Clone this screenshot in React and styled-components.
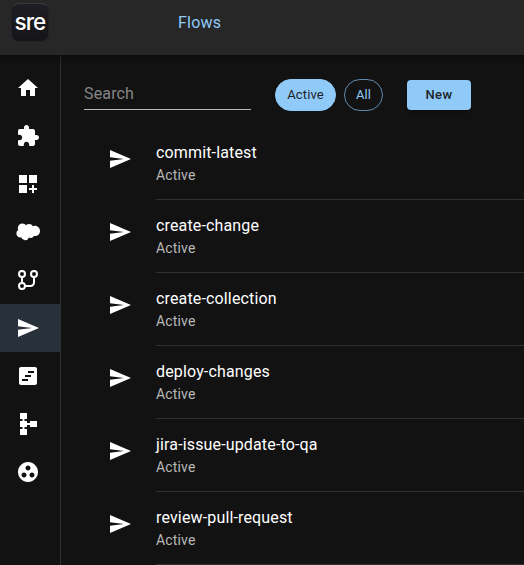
import React from "react";
import styled, { createGlobalStyle } from "styled-components";

const GlobalStyle = createGlobalStyle`
  * { box-sizing: border-box; }
  body {
    margin: 0;
    background: #121212;
    color: #fff;
    font-family: Roboto, sans-serif;
    overflow: hidden;
  }
`;

const Page = styled.div`
  display: flex;
  flex-direction: column;
  height: 565px;
  overflow: hidden;
`;

const Header = styled.header`
  display: flex;
  flex: none;
  height: 55px;
  padding-left: 11px;
  background: #272727;
  box-shadow: 0 2px 4px -1px rgba(0, 0, 0, 0.2), 0 4px 5px rgba(0, 0, 0, 0.14),
    0 1px 10px rgba(0, 0, 0, 0.12);
  z-index: 1;
`;

const Logo = styled.div`
  display: flex;
  justify-content: center;
  width: 38px;
  height: 39px;
  margin-top: 3px;
  border: 1px solid #222128;
  border-top-color: #3b3a42;
  border-radius: 8px;
  background: linear-gradient(#1e1d23, #151518);
  font: 500 22.5px/36px Inter, sans-serif;
  letter-spacing: -0.9px;
`;

const HeaderTab = styled.div`
  margin-left: 129px;
  color: #90caf9;
  font-size: 16px;
  line-height: 46px;
  letter-spacing: 0.2px;
`;

const Body = styled.div`
  display: flex;
  flex: 1;
  min-height: 0;
`;

const Sidebar = styled.nav`
  flex: none;
  width: 61px;
  padding-top: 9px;
  border-right: 1px solid #2e2e2e;
`;

const NavItem = styled.div`
  display: flex;
  align-items: center;
  height: 48px;
  padding-left: 16px;
  background: ${({ $selected }) => ($selected ? "#28303a" : "transparent")};
`;

const Icon = styled.svg`
  display: block;
  flex: none;
  width: 24px;
  height: 24px;
  fill: #fff;
`;

const Content = styled.main`
  flex: 1;
  min-width: 0;
  padding-top: 24px;
`;

const Toolbar = styled.div`
  display: flex;
  align-items: flex-start;
  height: 48px;
  padding-left: 23px;
`;

const Search = styled.input`
  width: 167px;
  height: 31px;
  padding: 0 0 2px;
  border: 0;
  border-bottom: 1px solid #b8b8b8;
  outline: none;
  background: transparent;
  color: #fff;
  font: 16px Roboto, sans-serif;
  letter-spacing: 0.15px;
  &::placeholder { color: #858585; opacity: 1; }
`;

const Chip = styled.div`
  width: ${({ $width }) => $width}px;
  height: 32px;
  margin-left: ${({ $gap }) => $gap}px;
  border: 1px solid ${({ $filled }) => ($filled ? "#90caf9" : "#6088aa")};
  border-radius: 16px;
  background: ${({ $filled }) => ($filled ? "#90caf9" : "transparent")};
  color: ${({ $filled }) => ($filled ? "#1c2429" : "#90caf9")};
  font-size: 13px;
  line-height: 30px;
  letter-spacing: 0.12px;
  text-align: center;
`;

const NewButton = styled.button`
  width: 64px;
  height: 30px;
  margin: 1px 0 0 24px;
  padding: 0;
  border: 0;
  border-radius: 4px;
  background: #90caf9;
  box-shadow: 0 2px 3px rgba(0, 0, 0, 0.3);
  color: #1c2429;
  font: 500 13px/30px Roboto, sans-serif;
  letter-spacing: 0.46px;
`;

const Row = styled.div`
  display: flex;
  padding-left: 47px;
  height: 73px;
`;

const RowIcon = styled.div`
  width: 48px;
  padding-top: 20px;
`;

const RowText = styled.div`
  flex: 1;
  padding-top: 14px;
  border-bottom: 1px solid #303030;
`;

const Title = styled.div`
  font-size: 16px;
  line-height: 24px;
  letter-spacing: 0.15px;
`;

const Status = styled.div`
  color: #b8b8b8;
  font-size: 14px;
  line-height: 20px;
  letter-spacing: 0.15px;
`;

const paths = {
  home: "M10 20v-6h4v6h5v-8h3L12 3 2 12h3v8z",
  extension:
    "M20.5 11H19V7c0-1.1-.9-2-2-2h-4V3.5C13 2.12 11.88 1 10.5 1S8 2.12 8 3.5V5H4c-1.1 0-1.99.9-1.99 2v3.8H3.5c1.49 0 2.7 1.21 2.7 2.7s-1.21 2.7-2.7 2.7H2V20c0 1.1.9 2 2 2h3.8v-1.5c0-1.49 1.21-2.7 2.7-2.7 1.49 0 2.7 1.21 2.7 2.7V22H17c1.1 0 2-.9 2-2v-4h1.5c1.38 0 2.5-1.12 2.5-2.5S21.88 11 20.5 11z",
  dashboard:
    "M3 3h8v8H3zM13 3h8v8h-8zM3 13h8v8H3zM18 13h-2v3h-3v2h3v3h2v-3h3v-2h-3z",
  cloud:
    "M10 5.3a4.3 4.3 0 0 1 3.1-1.3c1.6 0 3 .9 3.7 2.2a5.2 5.2 0 0 1 2.1-.5c2.8 0 5.1 2.4 5.1 5.2s-2.3 5.2-5.1 5.2l-1-.1a3.7 3.7 0 0 1-4.9 1.5 4.2 4.2 0 0 1-7.9-.2l-.8.1A3.9 3.9 0 0 1 .4 13.4a4.1 4.1 0 0 1 1.7-3.5 4.7 4.7 0 0 1-.3-1.8A4.7 4.7 0 0 1 6.5 3.4C7.9 3.4 9.2 4.1 10 5.3z",
  send: "M2 21 23 12 2 3v7.3L16 12 2 13.7z",
  timeline:
    "M19 3H5c-1.1 0-2 .9-2 2v14c0 1.1.9 2 2 2h14c1.1 0 2-.9 2-2V5c0-1.1-.9-2-2-2zM12 17H6v-2h6v2zm3-4H9v-2h6v2zm3-4h-6V7h6v2z",
  schema:
    "M14 9v2h-3V9H8.5V7H11V1H4v6h2.5v2H4v6h2.5v2H4v6h7v-6H8.5v-2H11v-2h3v2h7V9z",
  group:
    "M12 2C6.48 2 2 6.48 2 12s4.48 10 10 10 10-4.48 10-10S17.52 2 12 2zM8 17.5c-1.38 0-2.5-1.12-2.5-2.5s1.12-2.5 2.5-2.5 2.5 1.12 2.5 2.5-1.12 2.5-2.5 2.5zM9.5 8c0-1.38 1.12-2.5 2.5-2.5s2.5 1.12 2.5 2.5-1.12 2.5-2.5 2.5S9.5 9.38 9.5 8zm6.5 9.5c-1.38 0-2.5-1.12-2.5-2.5s1.12-2.5 2.5-2.5 2.5 1.12 2.5 2.5-1.12 2.5-2.5 2.5z",
};

const BranchStroke = styled.g`
  fill: none;
  stroke: #fff;
  stroke-width: 2;
`;

function Glyph({ name }) {
  return (
    <Icon viewBox="0 0 24 24">
      {name === "branch" ? (
        <BranchStroke>
          <circle cx="6" cy="6" r="3" />
          <circle cx="18" cy="6" r="3" />
          <circle cx="6" cy="18" r="3" />
          <path d="M6 9v6M9 18h5.5a3.5 3.5 0 0 0 3.5-3.5V9" />
        </BranchStroke>
      ) : (
        <path fillRule="evenodd" d={paths[name]} />
      )}
    </Icon>
  );
}

const navItems = [
  "home",
  "extension",
  "dashboard",
  "cloud",
  "branch",
  "send",
  "timeline",
  "schema",
  "group",
];

const flows = [
  "commit-latest",
  "create-change",
  "create-collection",
  "deploy-changes",
  "jira-issue-update-to-qa",
  "review-pull-request",
];

export default function App() {
  return (
    <Page>
      <GlobalStyle />
      <Header>
        <Logo>sre</Logo>
        <HeaderTab>Flows</HeaderTab>
      </Header>
      <Body>
        <Sidebar>
          {navItems.map((name) => (
            <NavItem key={name} $selected={name === "send"}>
              <Glyph name={name} />
            </NavItem>
          ))}
        </Sidebar>
        <Content>
          <Toolbar>
            <Search placeholder="Search" />
            <Chip $filled $width={61} $gap={24}>Active</Chip>
            <Chip $width={39} $gap={8}>All</Chip>
            <NewButton>New</NewButton>
          </Toolbar>
          {flows.map((flow) => (
            <Row key={flow}>
              <RowIcon>
                <Glyph name="send" />
              </RowIcon>
              <RowText>
                <Title>{flow}</Title>
                <Status>Active</Status>
              </RowText>
            </Row>
          ))}
        </Content>
      </Body>
    </Page>
  );
}
